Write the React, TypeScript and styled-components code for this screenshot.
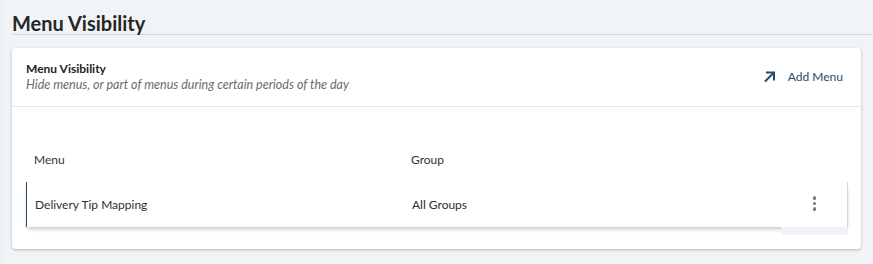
import React from "react";
import styled, { createGlobalStyle } from "styled-components";

const Global = createGlobalStyle`
  html, body { margin: 0; padding: 0; background: #f1f4f7; }
  body { font-family: Lato, "Open Sans", sans-serif; color: #2b2b2b; }
  * { box-sizing: border-box; }
`;

const Page = styled.div`
  padding: 0 12px 0 9px;
  min-height: 264px;
  border-left: 3px solid #eef1f4;
`;

const PageTitle = styled.h1`
  margin: 0 -12px 0 0;
  padding-top: 11px;
  height: 35px;
  font-size: 20px;
  font-weight: 700;
  line-height: 24px;
  color: #262626;
  border-bottom: 1px solid #d3d9df;
`;

const Card = styled.section`
  margin-top: 13px;
  width: 849px;
  background: #fff;
  border-radius: 4px;
  box-shadow: 0 1px 3px rgba(0, 0, 0, 0.25);
  padding-bottom: 22px;
`;

const CardHeader = styled.header`
  display: flex;
  align-items: center;
  justify-content: space-between;
  height: 59px;
  padding: 0 19px 0 14px;
  border-bottom: 1px solid #e3e6e9;
`;

const HeaderText = styled.div`
  display: flex;
  flex-direction: column;
  margin-top: 1px;
`;

const CardTitle = styled.div`
  font-size: 12px;
  font-weight: 700;
  line-height: 15px;
  color: #222;
`;

const CardSubtitle = styled.div`
  font-size: 12.5px;
  font-style: italic;
  line-height: 18px;
  color: #6b6b6b;
`;

const AddButton = styled.button`
  display: flex;
  align-items: center;
  gap: 12px;
  border: 0;
  background: none;
  padding: 0;
  font-family: inherit;
  font-size: 12px;
  color: #1f4b6e;
  cursor: pointer;
  margin-top: -2px;
  margin-right: -1px;
`;

const Table = styled.div`
  margin: 30px 13px 0 14px;
`;

const Row = styled.div<{ $body?: boolean }>`
  position: relative;
  display: grid;
  grid-template-columns: 377px 1fr 68px;
  align-items: center;
  height: 45px;
  font-size: 12px;
  color: #333;
  ${(p) =>
    p.$body &&
    `
    border-left: 1px solid #1f4b6e;
    border-right: 1px solid #d6d6d6;
    box-shadow: 0 3px 4px -1px rgba(0,0,0,0.22);
    color: #2e2e2e;
  `}
`;

const Cell = styled.div`
  padding-left: 8px;
`;

const ActionCell = styled.div`
  position: relative;
  height: 100%;
  display: flex;
  align-items: center;
  justify-content: center;
  &::after {
    content: "";
    position: absolute;
    left: 2px;
    right: -1px;
    top: 100%;
    height: 8px;
    background: #eff3f7;
  }
`;

const Kebab = styled.button`
  display: flex;
  flex-direction: column;
  gap: 2px;
  border: 0;
  background: none;
  padding: 0;
  margin-left: 3px;
  margin-top: -2px;
  span {
    width: 3.5px;
    height: 3.5px;
    border-radius: 50%;
    background: #777;
  }
`;

export default function App() {
  return (
    <>
      <Global />
      <Page>
        <PageTitle>Menu Visibility</PageTitle>
        <Card>
          <CardHeader>
            <HeaderText>
              <CardTitle>Menu Visibility</CardTitle>
              <CardSubtitle>Hide menus, or part of menus during certain periods of the day</CardSubtitle>
            </HeaderText>
            <AddButton>
              <svg width="13" height="13" viewBox="0 0 13 13" fill="none" stroke="#1f4b6e" strokeWidth="2">
                <path d="M2 11.5 11 2.5" />
                <path d="M3 2.5h8v8" />
              </svg>
              Add Menu
            </AddButton>
          </CardHeader>
          <Table>
            <Row>
              <Cell>Menu</Cell>
              <Cell>Group</Cell>
              <div />
            </Row>
            <Row $body>
              <Cell>Delivery Tip Mapping</Cell>
              <Cell>All Groups</Cell>
              <ActionCell>
                <Kebab aria-label="More">
                  <span />
                  <span />
                  <span />
                </Kebab>
              </ActionCell>
            </Row>
          </Table>
        </Card>
      </Page>
    </>
  );
}
